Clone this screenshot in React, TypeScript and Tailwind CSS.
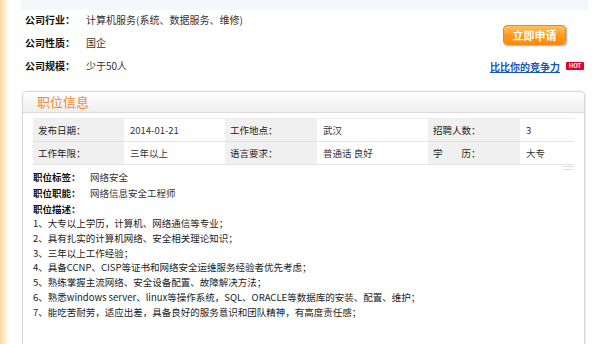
import React from "react";

const tableRows = [
  [
    { t: "发布日期：", l: true },
    { t: "2014-01-21" },
    { t: "工作地点：", l: true },
    { t: "武汉" },
    { t: "招聘人数：", l: true },
    { t: "3" },
  ],
  [
    { t: "工作年限：", l: true },
    { t: "三年以上" },
    { t: "语言要求：", l: true },
    { t: "普通话 良好" },
    { t: "学\u3000\u3000历：", l: true },
    { t: "大专" },
  ],
];

const desc = [
  "1、大专以上学历，计算机、网络通信等专业；",
  "2、具有扎实的计算机网络、安全相关理论知识；",
  "3、三年以上工作经验；",
  "4、具备CCNP、CISP等证书和网络安全运维服务经验者优先考虑；",
  "5、熟练掌握主流网络、安全设备配置、故障解决方法；",
  "6、熟悉windows server、linux等操作系统，SQL、ORACLE等数据库的安装、配置、维护；",
  "7、能吃苦耐劳，适应出差，具备良好的服务意识和团队精神，有高度责任感；",
];

export default function App() {
  return (
    <div className="flex w-[599px] h-[344px] overflow-hidden bg-white font-['Noto_Sans_CJK_SC',sans-serif] text-[#333]">
      <div className="w-[9px] shrink-0 bg-gradient-to-r from-[#fcd6a0] via-[#fdebd2] to-white" />
      <div className="ml-[12px] w-[567px] shrink-0 flex flex-col">
        <div className="h-[10px] bg-[#f4f7fc]" />
        <div className="flex justify-between">
          <div className="flex flex-col gap-[3px] pl-[4px]">
            {[
              ["公司行业：", "计算机服务(系统、数据服务、维修)"],
              ["公司性质：", "国企"],
              ["公司规模：", "少于50人"],
            ].map(([a, b]) => (
              <div key={a} className="flex h-[20px] items-center text-[10px] leading-[20px]">
                <span className="w-[61px] font-bold text-[#111]">{a}</span>
                <span className="text-[#333]">{b}</span>
              </div>
            ))}
          </div>
          <div className="flex flex-col items-end">
            <div className="mt-[15px] mr-[22px] flex h-[20px] w-[63px] items-center justify-center rounded-[4px] border border-[#e98a1c] bg-gradient-to-b from-[#ffc15e] via-[#ff9a1a] to-[#ff8a00] text-[11px] font-bold text-white shadow-[1px_1px_2px_rgba(0,0,0,0.35)]">
              立即申请
            </div>
            <div className="mt-[11px] mr-[4px] flex h-[20px] items-center gap-[6px]">
              <span className="text-[10px] font-bold text-[#1458b8] underline">比比你的竞争力</span>
              <span className="flex h-[8px] w-[18px] items-center justify-center rounded-[1px] bg-[#e4002b] text-[6px] font-bold leading-none text-white">
                HOT
              </span>
            </div>
          </div>
        </div>

        <div className="mt-[15px] ml-[1px] w-[563px] flex-1 rounded-t-[5px] border border-b-0 border-[#d6d6d6] shadow-[1px_0_2px_rgba(0,0,0,0.08)]">
          <div className="flex h-[21px] items-center rounded-t-[5px] border-b border-[#dcdcdc] bg-gradient-to-b from-white to-[#eeeeee] pl-[14px] text-[13px] text-[#f7892c]">
            职位信息
          </div>
          <div className="pl-[10px] pr-[9px] pt-[5px]">
            <div className="grid grid-cols-[91px_101px_92px_111px_92px_54px] border-t border-[#ececec] text-[9.5px]">
              {tableRows.map((row, ri) =>
                row.map((c, ci) => (
                  <div
                    key={`${ri}-${ci}`}
                    className={`flex items-center border-b border-[#e3e3e3] pl-[5px] ${ri === 0 ? "h-[23px]" : "h-[23px]"} ${c.l ? "bg-[#f0f0f0] text-[#222]" : "bg-white text-[#333] pl-[6px]"}`}
                  >
                    {c.t}
                  </div>
                ))
              )}
            </div>
            <div className="mt-[1px] flex justify-end pr-[1px]">
              <div className="h-[4px] w-[12px] border-y border-[#e0e0e0]" />
            </div>
            <div className="text-[9.5px]">
              <div className="flex h-[14px] items-center">
                <span className="w-[57px] font-bold text-[#111]">职位标签：</span>
                <span>网络安全</span>
              </div>
              <div className="flex h-[18px] items-center">
                <span className="w-[57px] font-bold text-[#111]">职位职能：</span>
                <span>网络信息安全工程师</span>
              </div>
              <div className="flex h-[14px] items-center">
                <span className="font-bold text-[#111]">职位描述：</span>
              </div>
              <div className="leading-[14.8px] text-[#222]">
                {desc.map((d) => (
                  <div key={d} className="whitespace-nowrap">{d}</div>
                ))}
              </div>
            </div>
          </div>
        </div>
      </div>
    </div>
  );
}
